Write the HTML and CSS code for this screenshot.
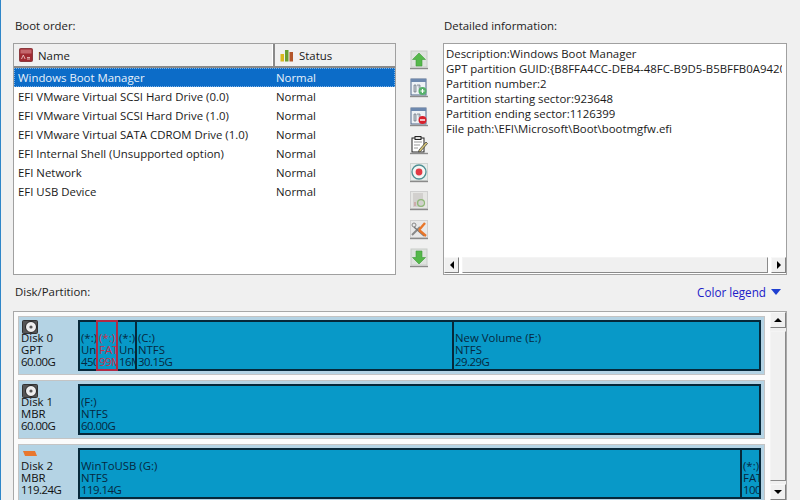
FILE: index.html
```html
<!DOCTYPE html>
<html lang="en">
<head>
<meta charset="utf-8">
<title>Boot order</title>
<link rel="stylesheet" href="styles.css">
</head>
<body>
<div class="app">
  <div class="top">
    <section class="boot">
      <div class="label">Boot order:</div>
      <div class="listbox">
        <div class="head">
          <div class="col-name">
            <svg class="hicon" viewBox="0 0 14 14"><rect x="0.5" y="0.5" width="13" height="13" rx="1" fill="#a02a32" stroke="#8c3a3e"/><rect x="1.5" y="1.5" width="11" height="4" fill="#c4666c"/><path d="M2.5 11l1.8-4 1.8 4M8 9.5h3M8 11h3" stroke="#f3d6d6" stroke-width=".8" fill="none"/></svg>
            <span>Name</span>
          </div>
          <div class="col-status">
            <svg class="hicon" viewBox="0 0 14 14"><rect x="0.5" y="6" width="3.5" height="7.5" fill="#d8b81e"/><rect x="5" y="2" width="3.5" height="11.5" fill="#6a9e30"/><rect x="9.5" y="4" width="3.5" height="9.5" fill="#b4562a"/></svg>
            <span>Status</span>
          </div>
        </div>
        <div class="row selected"><span class="cell-name">Windows Boot Manager</span><span>Normal</span></div>
        <div class="row"><span class="cell-name">EFI VMware Virtual SCSI Hard Drive (0.0)</span><span>Normal</span></div>
        <div class="row"><span class="cell-name">EFI VMware Virtual SCSI Hard Drive (1.0)</span><span>Normal</span></div>
        <div class="row"><span class="cell-name">EFI VMware Virtual SATA CDROM Drive (1.0)</span><span>Normal</span></div>
        <div class="row"><span class="cell-name">EFI Internal Shell (Unsupported option)</span><span>Normal</span></div>
        <div class="row"><span class="cell-name">EFI Network</span><span>Normal</span></div>
        <div class="row"><span class="cell-name">EFI USB Device</span><span>Normal</span></div>
      </div>
    </section>

    <div class="tools">
      <div class="tool"><svg viewBox="0 0 18 20"><rect x="1" y="1" width="16" height="16" fill="#dfe3df" stroke="#c8ccc8"/><path d="M9 3l6.5 6.5H12V16H6V9.5H2.5z" fill="#55b84a" stroke="#3f9a3a" stroke-width=".6"/><path d="M0 18.5h18" stroke="#8a8a8a" stroke-width="1.4"/></svg></div>
      <div class="tool"><svg viewBox="0 0 18 20"><rect x="1" y="1" width="15" height="16" fill="#eef2f6" stroke="#51688c"/><rect x="1" y="1" width="15" height="3" fill="#6d88ae"/><path d="M4 7h2v7H4zM7 7h3v7" fill="#c8ced6" stroke="#6a7380" stroke-width=".7"/><circle cx="12.5" cy="13" r="4" fill="#55b06a"/><path d="M10.5 13h4M12.5 11v4" stroke="#fff" stroke-width="1.2"/><path d="M0 18.5h18" stroke="#8a8a8a" stroke-width="1.4"/></svg></div>
      <div class="tool"><svg viewBox="0 0 18 20"><rect x="1" y="1" width="15" height="16" fill="#eef2f6" stroke="#51688c"/><rect x="1" y="1" width="15" height="3" fill="#6d88ae"/><path d="M4 7h2v7H4zM7 7h3v7" fill="#c8ced6" stroke="#6a7380" stroke-width=".7"/><circle cx="12.5" cy="13" r="4" fill="#d8202c"/><path d="M10 13h5" stroke="#fff" stroke-width="1.4"/><path d="M0 18.5h18" stroke="#8a8a8a" stroke-width="1.4"/></svg></div>
      <div class="tool"><svg viewBox="0 0 18 20"><rect x="2" y="3" width="12" height="14" fill="#fff" stroke="#222"/><rect x="5" y="1.5" width="6" height="3" fill="#ddd" stroke="#222"/><path d="M4 7h8M4 10h6M4 13h4" stroke="#999"/><path d="M9 15l7-8 1.5 1.5-7 8-2 .5z" fill="#d9c879" stroke="#333" stroke-width=".7"/><path d="M0 18.5h18" stroke="#8a8a8a" stroke-width="1.4"/></svg></div>
      <div class="tool"><svg viewBox="0 0 18 20"><rect x="0.5" y="0.5" width="17" height="17" fill="#e8eceb" stroke="#cfd4d2"/><circle cx="9" cy="9" r="7" fill="#f2f6f5" stroke="#4e8f93" stroke-width="1.3"/><circle cx="9" cy="9" r="3.4" fill="#e23a44"/><path d="M0 18.5h18" stroke="#8a8a8a" stroke-width="1.4"/></svg></div>
      <div class="tool"><svg viewBox="0 0 18 20"><rect x="0.5" y="0.5" width="17" height="17" fill="#e6e6e4" stroke="#cfcfcf"/><rect x="3" y="2" width="10" height="14" fill="#d2d0ce"/><circle cx="11" cy="12" r="3.4" fill="none" stroke="#8fb878" stroke-width="1.4"/><path d="M5 15v-4" stroke="#c88888"/><path d="M0 18.5h18" stroke="#8a8a8a" stroke-width="1.4"/></svg></div>
      <div class="tool"><svg viewBox="0 0 18 20"><rect x="0.5" y="0.5" width="17" height="17" fill="#e8e8e8" stroke="#d0d0d0"/><path d="M2 15l8-8" stroke="#888" stroke-width="2"/><circle cx="4" cy="5" r="2" fill="none" stroke="#888"/><path d="M4 7l10 9" stroke="#777" stroke-width="1.4"/><path d="M9 10l6-7M9 10l7 6" stroke="#e8762a" stroke-width="2.4" fill="none"/><path d="M0 18.5h18" stroke="#8a8a8a" stroke-width="1.4"/></svg></div>
      <div class="tool"><svg viewBox="0 0 18 20"><rect x="1" y="1" width="16" height="16" fill="#dfe3df" stroke="#c8ccc8"/><path d="M9 16L2.5 9.5H6V3h6v6.5h3.5z" fill="#55b84a" stroke="#3f9a3a" stroke-width=".6"/><path d="M0 18.5h18" stroke="#8a8a8a" stroke-width="1.4"/></svg></div>
    </div>

    <section class="detail">
      <div class="label">Detailed information:</div>
      <div class="detailbox">
        <div class="detailtext">
          <div>Description:Windows Boot Manager</div>
          <div>GPT partition GUID:{B8FFA4CC-DEB4-48FC-B9D5-B5BFFB0A9420}</div>
          <div>Partition number:2</div>
          <div>Partition starting sector:923648</div>
          <div>Partition ending sector:1126399</div>
          <div>File path:\EFI\Microsoft\Boot\bootmgfw.efi</div>
        </div>
        <div class="hscroll">
          <div class="sbtn"><i class="tri tri-left"></i></div>
          <div class="strack"></div>
          <div class="sbtn"><i class="tri tri-right"></i></div>
        </div>
      </div>
    </section>
  </div>

  <div class="diskbar">
    <div class="label">Disk/Partition:</div>
    <div class="legend">Color legend<i class="legend-arrow"></i></div>
  </div>

  <div class="diskarea">
    <div class="disks">
      <div class="disk">
        <div class="diskinfo">
          <svg class="hdd" viewBox="0 0 16 14"><rect x="0.5" y="0.5" width="15" height="13" rx="1" fill="#555" stroke="#333"/><circle cx="9" cy="7" r="5.5" fill="#eee" stroke="#222"/><circle cx="9" cy="7" r="1.6" fill="#555"/></svg>
          <div>Disk 0</div><div>GPT</div><div class="size">60.00G</div>
        </div>
        <div class="parts">
          <div class="part w-a"><span>(*:)</span><span>Unallocated</span><span class="size">450M</span></div>
          <div class="part w-b red"><span>(*:)</span><span>FAT32</span><span class="size">99M</span></div>
          <div class="part w-c"><span>(*:)</span><span>Unallocated</span><span class="size">16M</span></div>
          <div class="part w-d"><span>(C:)</span><span>NTFS</span><span class="size">30.15G</span></div>
          <div class="part grow"><span>New Volume (E:)</span><span>NTFS</span><span class="size">29.29G</span></div>
        </div>
      </div>
      <div class="disk">
        <div class="diskinfo">
          <svg class="hdd" viewBox="0 0 16 14"><rect x="0.5" y="0.5" width="15" height="13" rx="1" fill="#555" stroke="#333"/><circle cx="9" cy="7" r="5.5" fill="#eee" stroke="#222"/><circle cx="9" cy="7" r="1.6" fill="#555"/></svg>
          <div>Disk 1</div><div>MBR</div><div class="size">60.00G</div>
        </div>
        <div class="parts">
          <div class="part grow"><span>(F:)</span><span>NTFS</span><span class="size">60.00G</span></div>
        </div>
      </div>
      <div class="disk">
        <div class="diskinfo">
          <svg class="hdd" viewBox="0 0 16 14"><path d="M1 3h12l2 5H3z" fill="#e8772e"/></svg>
          <div>Disk 2</div><div>MBR</div><div class="size">119.24G</div>
        </div>
        <div class="parts">
          <div class="part grow"><span>WinToUSB (G:)</span><span>NTFS</span><span class="size">119.14G</span></div>
          <div class="part w-e"><span>(*:)</span><span>FAT32</span><span class="size">100M</span></div>
        </div>
      </div>
    </div>
    <div class="vscroll">
      <div class="sbtn"><i class="tri tri-up"></i></div>
      <div class="strack"></div>
      <div class="sbtn"><i class="tri tri-down"></i></div>
    </div>
  </div>
</div>
</body>
</html>
```
FILE: styles.css
```css
html, body { margin: 0; padding: 0; }
body {
  width: 800px; height: 500px; overflow: hidden;
  background: #f0f0f0;
  font: 11.4px/19px "Open Sans", "Noto Sans", sans-serif;
  color: #1a1a1a;
}
.app {
  height: 500px; box-sizing: border-box; overflow: hidden;
  border-left: 1px solid #2f86c8;
  padding: 17px 13px 0 12px;
  display: flex; flex-direction: column;
}
.label { height: 18px; line-height: 18px; color: #222; padding-left: 2px; }
.top { display: flex; height: 258px; flex: none; }
.boot { width: 383px; flex: none; display: flex; flex-direction: column; }
.listbox {
  margin-top: 8px; flex: 1;
  background: #fff;
  border: 1px solid #a0a0a0;
}
.head { display: flex; height: 24px; box-sizing: border-box; background: #f0f0f0; border-bottom: 2px solid #8a8a8a; }
.col-name, .col-status { display: flex; align-items: center; gap: 5px; padding-left: 5px; box-sizing: border-box; }
.col-name { width: 261px; border-right: 2px solid #8a8a8a; box-shadow: inset -1px 0 0 #fff; }
.col-status { flex: 1; }
.hicon { width: 14px; height: 14px; flex: none; }
.row { display: flex; height: 19px; line-height: 20px; padding-left: 4px; }
.cell-name { width: 258px; flex: none; }
.selected { background: #0c6cc8; color: #e8f2fb; outline: 1px dotted #7fb3e6; outline-offset: -1px; }
.tools { width: 47px; flex: none; display: flex; flex-direction: column; gap: 8.3px; padding: 33px 0 0 13px; box-sizing: border-box; }
.tool { width: 20px; height: 20px; }
.tool svg { display: block; width: 20px; height: 20px; }
.detail { flex: 1; min-width: 0; display: flex; flex-direction: column; }
.detail .label { padding-left: 1px; }
.detailbox {
  margin-top: 8px; flex: 1; min-height: 0;
  background: #fff; border: 1px solid #a0a0a0;
  display: flex; flex-direction: column;
}
.detailtext { flex: 1; margin-right: 4px; padding: 2px 0 0 2px; overflow: hidden; white-space: nowrap; line-height: 15px; }
.hscroll { display: flex; height: 16px; flex: none; gap: 3px; padding-bottom: 1px; }
.vscroll { display: flex; flex-direction: column; width: 16px; flex: none; gap: 3px; background: #f0f0f0; }
.strack { flex: 1; background: #f0f0f0; border: 1px solid; border-color: #f4f4f4 #8a8a8a #8a8a8a #f4f4f4; }
.sbtn {
  width: 15px; height: 16px; flex: none; background: #f0f0f0;
  border: 1px solid; border-color: #f8f8f8 #808080 #808080 #f8f8f8; box-sizing: border-box;
  display: flex; align-items: center; justify-content: center;
}
.vscroll .sbtn { width: 16px; }
.tri { display: block; width: 0; height: 0; border: 4px solid transparent; }
.tri-left { border-right-color: #000; border-left-width: 0; }
.tri-right { border-left-color: #000; border-right-width: 0; }
.tri-up { border-bottom-color: #000; border-top-width: 0; }
.tri-down { border-top-color: #000; border-bottom-width: 0; }
.diskbar { display: flex; justify-content: space-between; align-items: center; margin-top: 8px; height: 18px; padding: 0 6px 0 0; }
.legend { color: #2020c8; font-size: 11.7px; display: flex; align-items: center; gap: 5px; }
.legend-arrow { width: 0; height: 0; border: 5.5px solid transparent; border-top: 6px solid #1f3fd0; border-bottom-width: 0; }
.diskarea {
  margin-top: 10px; flex: 1; min-height: 0;
  background: #fff; border: 1px solid #a8a8a8; border-bottom: 0;
  display: flex; overflow: hidden;
}
.disks { flex: 1; background: #fbfbfb; padding: 4px 5px 0 4px; display: flex; flex-direction: column; gap: 5px; min-width: 0; }
.disk {
  height: 59px; flex: none; display: flex; box-sizing: border-box;
  background: #b4d3e4; border: 1px solid #c4c4c4; padding: 3px 3px 3px 0;
}
.diskinfo { width: 59px; flex: none; padding-left: 2px; line-height: 12px; color: #111; box-sizing: border-box; }
.hdd { display: block; width: 16px; height: 14px; margin: 0 0 -2px 1px; }
.parts { flex: 1; display: flex; min-width: 0; border: 2px solid #06283a; background: #06283a; gap: 2px; }
.part {
  background: #0899c8; color: #06283f; overflow: hidden; white-space: nowrap;
  display: flex; flex-direction: column; padding: 10px 0 0 1px; line-height: 12px; min-width: 0; box-sizing: border-box;
}
.size { letter-spacing: -0.5px; }
.grow { flex: 1; }
.w-a { width: 16px; flex: none; }
.w-b { width: 18px; flex: none; }
.red { color: #c8304a; box-shadow: 0 0 0 2px #b02a44; position: relative; }
.w-c { width: 17px; flex: none; }
.w-d { width: 315px; flex: none; }
.w-e { width: 17px; flex: none; }
```
